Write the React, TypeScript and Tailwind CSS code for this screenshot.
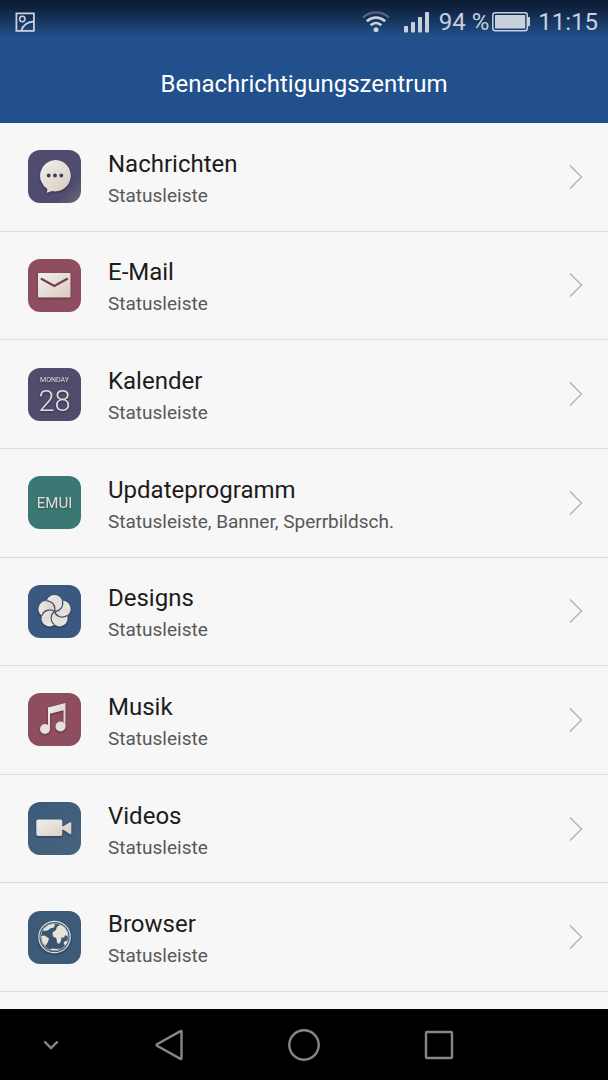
import type { ReactNode } from 'react';

type AppEntry = {
  id: string;
  name: string;
  channels: string;
  tile: string;
  icon: ReactNode;
};

const entries: AppEntry[] = [
  {
    id: 'messages',
    name: 'Nachrichten',
    channels: 'Statusleiste',
    tile: 'bg-linear-to-br from-[#504c70] from-75% to-[#6f6a76]',
    icon: (
      <>
        <path
          d="M27 10a15.7 15.7 0 1 1-3 31.1c-1.700.9-3.600 1.500-5.400 1.600.6-1.300.8-2.500.7-3.800A15.700 15.700 0 0 1 27 10z"
          fill="url(#cream)"
        />
        <circle cx="20.700" cy="25.500" r="1.900" fill="#3a3c5e" />
        <circle cx="27" cy="25.500" r="1.900" fill="#3a3c5e" />
        <circle cx="33.300" cy="25.500" r="1.900" fill="#3a3c5e" />
      </>
    )
  },
  {
    id: 'mail',
    name: 'E-Mail',
    channels: 'Statusleiste',
    tile: 'bg-[#8e4e5f]',
    icon: (
      <>
        <rect x="10" y="14" width="32.500" height="24.500" rx="1.200" fill="url(#cream)" />
        <path d="M12.800 19.500l13.500 7.500 13.500-7.500" fill="none" stroke="#753e50" strokeWidth="2.300" />
      </>
    )
  },
  {
    id: 'calendar',
    name: 'Kalender',
    channels: 'Statusleiste',
    tile: 'bg-[#504c6e]',
    icon: (
      <g fill="#e4ddda" textAnchor="middle" className="font-['Roboto','Liberation_Sans',sans-serif]">
        <text x="26.500" y="14" className="text-[7px]">MONDAY</text>
        <text x="26.500" y="43" className="text-[29px] font-light">28</text>
      </g>
    )
  },
  {
    id: 'updater',
    name: 'Updateprogramm',
    channels: 'Statusleiste, Banner, Sperrbildsch.',
    tile: 'bg-[#3b7874]',
    icon: (
      <text
        x="26.500"
        y="32"
        fill="#e4ddda"
        textAnchor="middle"
        className="font-['Roboto','Liberation_Sans',sans-serif] text-[15px]"
      >
        EMUI
      </text>
    )
  },
  {
    id: 'themes',
    name: 'Designs',
    channels: 'Statusleiste',
    tile: 'bg-[#3a5880]',
    icon: (
      <g transform="translate(26.500 26.500)">
        {[0, 72, 144, 216, 288].map((angle) => (
          <circle key={angle} cy="-8.200" r="8.300" fill="url(#cream)" transform={`rotate(${angle})`} />
        ))}
        {[0, 72, 144, 216, 288].map((angle) => (
          <path
            key={angle}
            d="M0 0A8.200 8.200 0 0 0 7.800-10.700"
            fill="none"
            stroke="#3a4f70"
            strokeWidth="1.200"
            transform={`rotate(${angle})`}
          />
        ))}
      </g>
    )
  },
  {
    id: 'music',
    name: 'Musik',
    channels: 'Statusleiste',
    tile: 'bg-[#8e4e5f]',
    icon: (
      <>
        <path d="M20 14.500L37.500 10v23h-2V17.300L22 20.800V36h-2z" fill="url(#cream)" />
        <circle cx="17" cy="36" r="5" fill="#e8e0da" />
        <circle cx="32.500" cy="33.500" r="5" fill="#e8e0da" />
      </>
    )
  },
  {
    id: 'videos',
    name: 'Videos',
    channels: 'Statusleiste',
    tile: 'bg-linear-to-br from-[#3c5b79] to-[#46647f]',
    icon: (
      <path
        d="M10.300 17.500h22a2 2 0 0 1 2 2v4.800h1l6.800-4a.8.8 0 0 1 1.200.7v10.500a.8.8 0 0 1-1.200.7l-6.800-4.500h-1V32a2 2 0 0 1-2 2h-22a2 2 0 0 1-2-2V19.500a2 2 0 0 1 2-2z"
        fill="url(#cream)"
      />
    )
  },
  {
    id: 'browser',
    name: 'Browser',
    channels: 'Statusleiste',
    tile: 'bg-[#3b5b78]',
    icon: (
      <>
        <circle cx="26.500" cy="26" r="15.700" fill="#3a5570" stroke="#e0dfdf" strokeWidth="1.200" />
        <circle cx="26.500" cy="26" r="13.800" fill="none" stroke="#c3cbd3" strokeWidth=".7" />
        <g fill="#e8e2dd">
          <path d="M16 17.500l4.500-3.500 5.500-1.300 1 1.600-1.500 2.400-3 .5-2.500 2-3.500.8-1.500-.8z" />
          <path d="M13.300 25l3.300-.5 4.400 3-1 3.300-2.600 4.200-3-3.500z" />
          <path d="M24.500 21.500l3.500-2.500.8-3 3.200-2.300 4.500 2.500 2.900 5 .4 4.300-2.700-1.500-1 2.800-2.600-.6-.5 3.800-2 3.100-2-1.500-.6-4.500-3.400-1.600z" />
          <path d="M36 31l2.500-1.600.7 2-1.500 2.500-2-.7z" />
          <path d="M22 38.500l2.500-1 4 .4 3-.3-1.700 1.500h-6z" />
        </g>
      </>
    )
  }
];

function StatusBar() {
  return (
    <div className="flex h-11 items-center bg-linear-to-b from-[#0d1e37] from-10% to-[#21508c] to-85% pr-[10px] pl-[15px] text-2xl leading-6 text-[#c8d0dc]">
      <svg className="size-5" viewBox="0 0 20 20" fill="none" stroke="currentColor" strokeWidth="1.800">
        <rect x="1.400" y="1.400" width="17.500" height="17.500" />
        <circle cx="7.300" cy="7" r="2.700" strokeWidth="1.500" />
        <path d="M6.500 19c1-5.500 5.500-9 12.500-9.500" />
      </svg>

      <svg className="ml-auto h-[22px] w-7" viewBox="0 0 28 22" fill="none" stroke="currentColor">
        <path d="M1 6.500C8.500-.4 19.500-.4 27 6.500" strokeWidth="2.200" opacity=".35" />
        <path d="M4.800 10.300c5.500-5 12.900-5 18.400 0" strokeWidth="2.700" />
        <path d="M8.600 14.300c3.300-2.900 7.500-2.900 10.800 0" strokeWidth="2.700" />
        <circle cx="14" cy="18.800" r="2.500" fill="currentColor" stroke="none" />
      </svg>
      <svg className="ml-[14px] h-[22px] w-[25px]" viewBox="0 0 25 22" fill="currentColor">
        <rect y="15" width="4" height="6.500" rx=".8" />
        <rect x="7" y="11" width="4" height="10.500" rx=".8" />
        <rect x="14" y="6" width="4" height="15.500" rx=".8" />
        <rect x="21" y="1" width="4" height="20.500" rx=".8" />
      </svg>
      <span className="ml-[10px]">94 %</span>
      <svg className="ml-[3px] h-5 w-[38px]" viewBox="0 0 38 20" fill="currentColor">
        <rect x=".8" y=".8" width="34.500" height="18" rx="2.500" fill="none" stroke="currentColor" strokeWidth="1.500" />
        <rect x="3" y="3" width="30.200" height="13.600" rx=".6" />
        <path d="M36 5h1.200a.8.8 0 0 1 .8.8v7.600a.8.8 0 0 1-.8.8H36z" />
      </svg>
      <span className="ml-2">11:15</span>
    </div>
  );
}

function AppRow({ entry }: { entry: AppEntry }) {
  return (
    <li className="border-b border-[#dcdcdc]">
      <button type="button" className="flex h-full w-full items-center pr-[25px] pl-7 text-left">
        <span className={`size-[53px] shrink-0 overflow-hidden rounded-xl ${entry.tile}`}>
          <svg className="size-full drop-shadow-[0_1px_1px_rgba(0,0,0,0.4)]" viewBox="0 0 53 53" aria-hidden="true">
            {entry.icon}
          </svg>
        </span>
        <span className="ml-[27px] flex flex-1 flex-col gap-1 pt-[6px]">
          <span className="text-2xl leading-7 text-[#1c1c1c]">{entry.name}</span>
          <span className="text-[19px] leading-7 text-[#575757]">{entry.channels}</span>
        </span>
        <svg
          className="h-6 w-[14px] shrink-0"
          viewBox="0 0 14 24"
          fill="none"
          stroke="#b0b0b0"
          strokeWidth="1.300"
          aria-hidden="true"
        >
          <path d="M1 .5L12.500 12 1 23.500" />
        </svg>
      </button>
    </li>
  );
}

function NavBar() {
  return (
    <nav className="grid h-[71px] grid-cols-[3fr_4fr_4fr_4fr_3fr] bg-black text-[#868686]">
      <button type="button" aria-label="Leiste ausblenden" className="flex items-center justify-center">
        <svg className="size-4" viewBox="0 0 16 16" fill="none" stroke="currentColor" strokeWidth="2.400" strokeLinecap="round">
          <path d="M2 5.200l6 5.800 6-5.800" />
        </svg>
      </button>
      <button type="button" aria-label="Zurück" className="flex items-center justify-center">
        <svg className="size-8" viewBox="0 0 32 32" fill="none" stroke="currentColor" strokeWidth="2.400" strokeLinejoin="round">
          <path d="M28.500 2.500v27a.6.6 0 0 1-1 .4L4 16.700a.8.8 0 0 1 0-1.400L27.500 2.100a.6.6 0 0 1 1 .4z" />
        </svg>
      </button>
      <button type="button" aria-label="Startseite" className="flex items-center justify-center">
        <svg className="size-8" viewBox="0 0 32 32" fill="none" stroke="currentColor" strokeWidth="2.400">
          <circle cx="16" cy="16" r="14.700" />
        </svg>
      </button>
      <button type="button" aria-label="Letzte Apps" className="flex items-center justify-center">
        <svg className="size-8" viewBox="0 0 32 32" fill="none" stroke="currentColor" strokeWidth="2.400">
          <rect x="3" y="3" width="26" height="26" rx="1" />
        </svg>
      </button>
    </nav>
  );
}

export default function App() {
  return (
    <div className="flex min-h-screen flex-col bg-[#f7f7f7] font-['Roboto','Liberation_Sans',sans-serif]">
      {/* shared fill for the raised icon shapes */}
      <svg className="absolute size-0" aria-hidden="true">
        <defs>
          <linearGradient id="cream" x1="0" y1="0" x2="1" y2="1">
            <stop offset="0" stopColor="#f2efec" />
            <stop offset="1" stopColor="#d8cbc0" />
          </linearGradient>
        </defs>
      </svg>

      <header className="bg-[#21508c]">
        <StatusBar />
        <h1 className="flex h-[79px] items-center justify-center text-2xl text-white">Benachrichtigungszentrum</h1>
      </header>

      <main className="flex flex-1 flex-col pb-[17px]">
        <ul className="grid flex-1 auto-rows-fr">
          {entries.map((entry) => (
            <AppRow key={entry.id} entry={entry} />
          ))}
        </ul>
      </main>

      <NavBar />
    </div>
  );
}
